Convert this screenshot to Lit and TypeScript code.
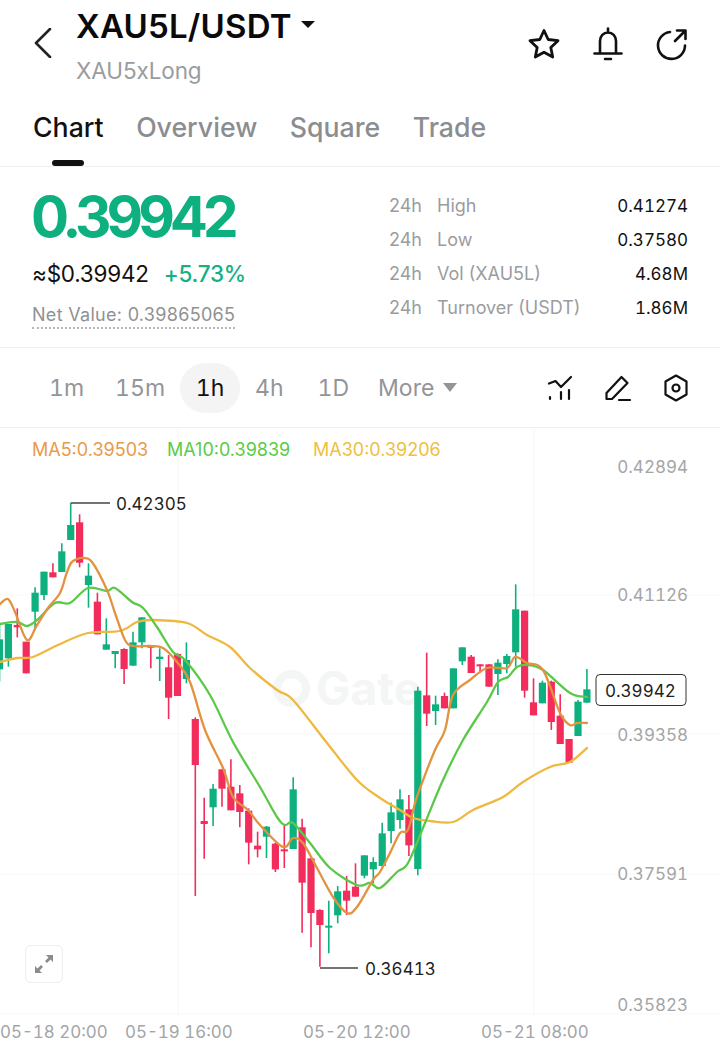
import { LitElement, html, css, svg } from "lit";
import { customElement } from "lit/decorators.js";

type C = [string, number, number, number, number];
const G = "g", R = "r";
const groupA: C[] = [
  [G,430,478,568,605],[G,432,432,535,560],[R,385,435,442,472],[R,485,485,580,580],[G,322,338,395,445],
  [G,275,275,345,360],[R,250,277,292,292],[G,190,214,276,276],[G,68,135,180,180],[R,103,127,248,262],
  [G,250,287,315,383],[R,338,365,463,463],[G,415,493,509,509],[G,513,513,522,565],[R,505,507,567,612],
  [G,455,487,557,557],[G,412,412,487,505],[R,497,497,503,565],[G,505,530,537,603],[R,525,562,653,717],
  [R,520,522,648,648],[G,487,540,597,610],
];
const groupB: C[] = [
  [R,292,297,435,828],[R,533,603,612,716],[G,492,506,562,618],[R,448,448,506,560],[R,418,500,571,571],
  [R,495,520,576,622],[R,565,572,668,733],[R,635,677,688,712],[G,618,620,650,714],[R,668,671,748,756],
  [R,612,688,693,744],[G,472,508,687,687],[R,596,622,788,938],[R,715,715,879,982],[R,868,870,915,1040],
  [G,842,917,923,1000],[G,798,814,886,910],[R,768,812,842,885],[R,730,800,830,830],[G,706,706,767,775],
  [G,712,726,748,790],[G,608,640,738,740],[G,548,577,633,670],
];
const groupC: C[] = [
  [G,658,688,750,776],[R,675,718,826,858],[G,350,362,897,916],[R,248,376,431,468],[G,377,403,423,465],
  [R,368,378,415,415],[G,295,295,415,415],[G,232,232,274,285],[R,255,260,309,309],[R,283,283,287,308],
  [R,283,283,350,350],[G,268,278,312,375],[G,252,258,282,310],[G,43,118,247,290],[R,122,122,362,383],
  [R,325,397,436,436],[G,332,338,400,400],[R,332,335,456,480],[R,373,437,522,522],[R,507,507,578,578],
  [G,390,395,498,498],[G,297,358,398,398],
];
const toAbs = (g: C[], y0: number) =>
  g.map(([c, a, b, d, e]) => [c, y0 + a / 3, y0 + b / 3, y0 + d / 3, y0 + e / 3] as [string, number, number, number, number]);
const candles = [...toAbs(groupA, 480), ...toAbs(groupB, 620), ...toAbs(groupC, 570)];

const ma5 = "0,604 8,599 15,612 27,640 37,625 48,608 60,593 66,575 71,563 77,559 83,558 92,562 107,590 115,613 125,640 133,646 150,646 163,648 177,662 190,682 205,730 223,768 233,797 248,810 260,825 283,847 293,838 303,843 317,868 333,897 347,913 357,907 373,880 380,872 390,853 400,833 408,830 415,803 422,783 435,750 445,730 453,695 470,680 487,668 507,668 515,657 527,663 543,670 560,713 570,725 577,723 587,723";
const ma10 = "0,624 17,622 27,626 37,620 55,603 70,603 88,588 107,591 115,588 132,602 143,608 157,627 173,652 185,660 210,695 233,742 260,787 277,817 285,825 293,823 310,843 330,868 357,885 370,883 380,888 397,872 408,863 425,823 443,780 463,740 487,702 498,682 508,677 517,667 527,665 543,670 570,693 587,697";
const ma30 = "0,662 17,658 33,657 58,645 88,633 120,631 137,622 153,620 187,623 207,635 230,647 250,668 277,690 293,700 327,743 357,780 380,798 400,810 413,818 430,821 453,822 473,810 503,797 523,782 550,767 570,762 587,748";

// Catmull-Rom smoothing of a point list into a cubic path.
const smooth = (s: string) => {
  const p = s.split(" ").map((q) => q.split(",").map(Number));
  let d = `M${p[0][0]} ${p[0][1]}`;
  for (let i = 0; i < p.length - 1; i++) {
    const a = p[Math.max(i - 1, 0)], b = p[i], c = p[i + 1], e = p[Math.min(i + 2, p.length - 1)];
    const f = (n: number) => n.toFixed(1);
    d += `C${f(b[0] + (c[0] - a[0]) / 6)} ${f(b[1] + (c[1] - a[1]) / 6)} ${f(c[0] - (e[0] - b[0]) / 6)} ${f(c[1] - (e[1] - b[1]) / 6)} ${c[0]} ${c[1]}`;
  }
  return d;
};

const stats = [
  ["High", "0.41274"],
  ["Low", "0.37580"],
  ["Vol (XAU5L)", "4.68M"],
  ["Turnover (USDT)", "1.86M"],
];

@customElement("app-root")
export class AppRoot extends LitElement {
  static styles = css`
    :host { display: block; width: 720px; height: 1046px; overflow: hidden; background: #fff;
      font-family: Inter, "Liberation Sans", sans-serif; color: #111; }
    .head { height: 97px; display: flex; align-items: flex-start; padding: 0 31px 0 32px; box-sizing: border-box; }
    .back { width: 44px; height: 30px; margin-top: 28px; flex: none; }
    .titles { flex: 1; }
    .title { display: flex; align-items: center; height: 52px; font-size: 33px; font-weight: 600; letter-spacing: 0.2px; color: #0a0a0a; }
    .caret { width: 0; height: 0; border-left: 7px solid transparent; border-right: 7px solid transparent; border-top: 7px solid #111; margin: 0 0 4px 9px; }
    .sub { font-size: 22.5px; color: #9a9c9e; margin-top: 6px; line-height: 26px; letter-spacing: -0.1px; }
    .acts { display: flex; gap: 30px; margin-top: 27px; }
    .acts svg { width: 34px; height: 34px; display: block; }
    .tabs { height: 70px; padding-left: 33px; display: flex; gap: 32.5px; font-size: 26.7px; font-weight: 500; color: #8b8d90; border-bottom: 1px solid #efefef; box-sizing: border-box; line-height: 60px; }
    .tab { position: relative; }
    .tab.on { color: #111; }
    .tab.on::after { content: ""; position: absolute; left: 19px; width: 32px; height: 6px; bottom: 0; border-radius: 3px; background: #111; }
    .stats { height: 181px; display: flex; justify-content: space-between; padding: 0 32px; box-sizing: border-box; border-bottom: 1px solid #efefef; }
    .price { font-size: 56.5px; font-weight: 700; color: #0db07e; letter-spacing: -5px; line-height: 60px; margin: 20px 0 0 -1px; }
    .sub-price { display: flex; gap: 15px; font-size: 22.5px; line-height: 28px; margin-top: 13px; letter-spacing: -0.25px; }
    .chg { color: #14b184; font-weight: 500; }
    .net { display: inline-block; font-size: 18px; color: #8f9194; border-bottom: 2px dotted #b5b7b9; line-height: 23px; margin-top: 15px; padding-bottom: 1px; letter-spacing: 0.3px; }
    .table { width: 299px; margin-top: 22px; font-size: 18px; color: #9a9c9e; }
    .row { display: flex; height: 34px; line-height: 34px; }
    .row .h { width: 48px; }
    .row .l { flex: 1; }
    .row .v { color: #111; font-variant-numeric: tabular-nums; font-size: 17px; }
    .tools { height: 80px; display: flex; align-items: center; padding: 0 29px 0 49px; box-sizing: border-box; border-bottom: 1px solid #efefef; font-size: 23px; color: #939598; font-variant-numeric: tabular-nums; }
    .ranges { display: flex; align-items: center; flex: 1; }
    .rg { margin-right: 31px; }
    .rg.h4 { margin-right: 34px; }
    .rg.d1 { margin-right: 29px; }
    .pill { width: 60px; height: 50px; margin: 0 15px 0 -16px; border-radius: 25px; background: #f4f4f4; color: #111; display: flex; align-items: center; justify-content: center; }
    .more { display: flex; align-items: center; }
    .more i { width: 0; height: 0; border-left: 7px solid transparent; border-right: 7px solid transparent; border-top: 9px solid #939598; margin-left: 9px; }
    .ticons { display: flex; gap: 28px; }
    .ticons svg { width: 30px; height: 30px; display: block; }
    .chart { position: relative; height: 618px; }
    .chart > svg { display: block; width: 720px; height: 618px; }
    .chart text { font-family: Inter, "Liberation Sans", sans-serif; font-size: 17px; font-variant-numeric: tabular-nums; }
    .chart .legend { font-size: 18px; font-variant-numeric: normal; }
    .chart .time { font-size: 16.900px; }
    .chart .mark { font-size: 46px; font-weight: 700; }
    .expand { position: absolute; left: 25px; top: 517px; width: 38px; height: 38px; box-sizing: border-box; border: 1.5px solid #eeeeee; border-radius: 6px; background: #fff; display: flex; align-items: center; justify-content: center; }
    .expand svg { width: 22px; height: 22px; }
  `;

  private chart() {
    const grid = [595, 734, 874, 1014].map((y) => svg`<line x1="0" x2="720" y1=${y} y2=${y} stroke="#f7f7f7" stroke-width="1"></line>`);
    const vgrid = [178, 534].map((x) => svg`<line x1=${x} x2=${x} y1="428" y2="1014" stroke="#f7f7f7" stroke-width="1"></line>`);
    const cs = candles.map(([c, wt, bt, bb, wb], i) => {
      const x = -0.5 + 8.9 * i;
      const col = c === G ? "#0fb07f" : "#f22c5b";
      return svg`<line x1=${x} x2=${x} y1=${wt} y2=${wb} stroke=${col} stroke-width="1.6"></line>
        <rect x=${x - 3.6} width="7.2" y=${bt} height=${Math.max(bb - bt, 2)} fill=${col}></rect>`;
    });
    const axis = [[466, "0.42894"], [594, "0.41126"], [734, "0.39358"], [873, "0.37591"], [1004, "0.35823"]] as [number, string][];
    const times = [[0, "05-18 20:00"], [125, "05-19 16:00"], [303, "05-20 12:00"], [481, "05-21 08:00"]] as [number, string][];
    return html`<svg viewBox="0 428 720 618" xmlns="http://www.w3.org/2000/svg">
      ${svg`
      ${grid}${vgrid}
      <circle cx="291.500" cy="688.500" r="14.500" fill="none" stroke="#f4f5f5" stroke-width="8"></circle>
      <text class="mark" x="316" y="705" fill="#f4f5f5">Gate</text>
      <text class="legend" x="32" y="456" fill="#e89a4c">MA5:0.39503</text>
      <text class="legend" x="167" y="456" fill="#58cc46">MA10:0.39839</text>
      <text class="legend" x="313" y="456" fill="#efbf3f">MA30:0.39206</text>
      ${axis.map(([y, t]) => svg`<text x="688" y=${y + 6.5} text-anchor="end" fill="#a3a5a7">${t}</text>`)}
      ${times.map(([x, t]) => svg`<text class="time" x=${x} y="1038" fill="#a3a5a7">${t}</text>`)}
      ${cs}
      <path d=${smooth(ma30)} fill="none" stroke="#efb93f" stroke-width="2.300" stroke-linejoin="round" stroke-linecap="round"></path>
      <path d=${smooth(ma10)} fill="none" stroke="#5cc84a" stroke-width="2.300" stroke-linejoin="round" stroke-linecap="round"></path>
      <path d=${smooth(ma5)} fill="none" stroke="#e2933f" stroke-width="2.300" stroke-linejoin="round" stroke-linecap="round"></path>
      <path d="M71 503H110" stroke="#444" stroke-width="1.400" fill="none"></path>
      <text x="116" y="509.500" fill="#222">0.42305</text>
      <path d="M320 968H358" stroke="#444" stroke-width="1.400" fill="none"></path>
      <text x="365" y="974.500" fill="#222">0.36413</text>
      <rect x="596" y="674.500" width="90" height="31" rx="4" fill="#fff" stroke="#333" stroke-width="1"></rect>
      <text x="605" y="696.500" fill="#222">0.39942</text>
      `}
    </svg>`;
  }

  render() {
    return html`
      <div class="head">
        <svg class="back" viewBox="0 0 44 30" fill="none"><path d="M18 1 4 15l14 14" stroke="#222" stroke-width="2.600" stroke-linecap="round" stroke-linejoin="round"></path></svg>
        <div class="titles">
          <div class="title">XAU5L/USDT<span class="caret"></span></div>
          <div class="sub">XAU5xLong</div>
        </div>
        <div class="acts">
          <svg viewBox="0 0 34 34" fill="none" stroke="#111" stroke-width="2.800" stroke-linejoin="round"><path d="M17 3.500l4.200 9 9.800 1.200-7.200 6.700 1.900 9.700L17 25.300l-8.700 4.800 1.900-9.700L3 13.700l9.800-1.200z"></path></svg>
          <svg viewBox="0 0 34 34" fill="none" stroke="#111" stroke-width="2.600" stroke-linecap="round"><path d="M17 1.500v3M9 26V14c0-5 3.500-8.500 8-8.500s8 3.500 8 8.500v12M3.500 26.500h27M14 32h6"></path></svg>
          <svg viewBox="0 0 34 34" fill="none" stroke="#111" stroke-width="2.600" stroke-linecap="round" stroke-linejoin="round"><path d="M30 18.500A13.500 13.500 0 1 1 15 5M20 14 30 4M22 3.500h8.500V12"></path></svg>
        </div>
      </div>
      <div class="tabs">
        <div class="tab on">Chart</div>
        <div class="tab">Overview</div>
        <div class="tab">Square</div>
        <div class="tab">Trade</div>
      </div>
      <div class="stats">
        <div>
          <div class="price">0.39942</div>
          <div class="sub-price"><span>≈$0.39942</span><span class="chg">+5.73%</span></div>
          <div class="net">Net Value: 0.39865065</div>
        </div>
        <div class="table">
          ${stats.map(([l, v]) => html`<div class="row"><span class="h">24h</span><span class="l">${l}</span><span class="v">${v}</span></div>`)}
        </div>
      </div>
      <div class="tools">
        <div class="ranges">
          <span class="rg">1m</span>
          <span class="rg">15m</span>
          <span class="pill">1h</span>
          <span class="rg h4">4h</span>
          <span class="rg d1">1D</span>
          <span class="more">More<i></i></span>
        </div>
        <div class="ticons">
          <svg viewBox="0 0 30 30" fill="none" stroke="#111" stroke-width="2.200" stroke-linecap="round" stroke-linejoin="round"><path d="M4 10.500 10.500 8 16 14 26 4M5 24v2M16 19v7M24 17v9"></path></svg>
          <svg viewBox="0 0 30 30" fill="none" stroke="#111" stroke-width="2.200" stroke-linecap="round" stroke-linejoin="round"><path d="M3.500 26v-6L18.500 4l6 6L9 26zM16 27h11"></path></svg>
          <svg viewBox="0 0 30 30" fill="none" stroke="#111" stroke-width="2.200" stroke-linejoin="round"><path d="M15 2.500l10.500 6v13L15 27.500l-10.500-6v-13z"></path><circle cx="15" cy="15" r="3.500"></circle></svg>
        </div>
      </div>
      <div class="chart">
        ${this.chart()}
        <div class="expand">
          <svg viewBox="0 0 22 22" fill="#8a8c8e"><path d="M13 2h7v7l-2.500-2.500-3.500 3.500-2-2 3.500-3.500zM9 20H2v-7l2.500 2.500L8 12l2 2-3.500 3.500z"></path></svg>
        </div>
      </div>
    `;
  }
}
